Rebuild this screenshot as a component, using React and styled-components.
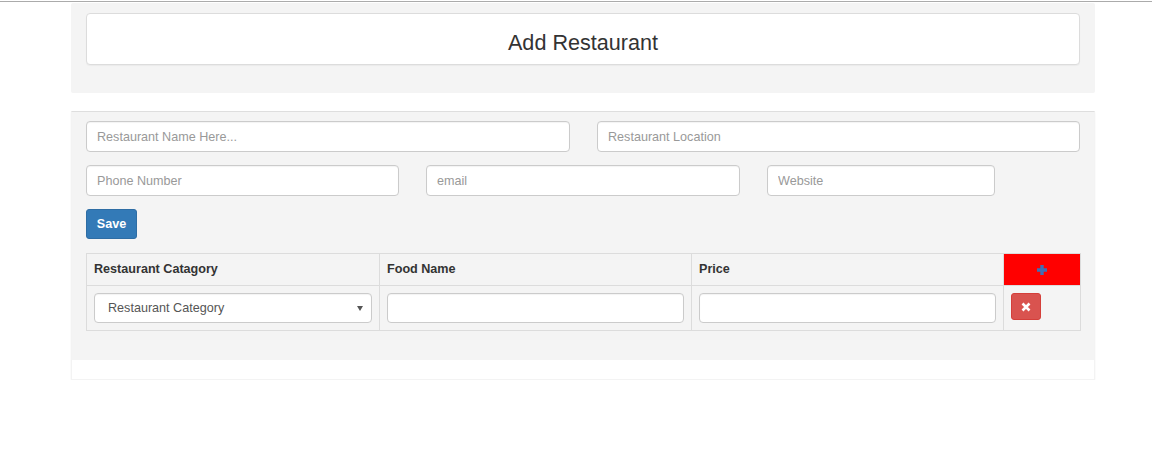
import styled, { createGlobalStyle } from "styled-components";

const GlobalStyle = createGlobalStyle`
  html, body {
    margin: 0;
    padding: 0;
    background: #fff;
    font-family: "Liberation Sans", Arial, sans-serif;
    font-size: 12.6px;
    color: #333;
  }
  * { box-sizing: border-box; }
`;

const TopRule = styled.div`
  height: 1px;
  margin-top: 1px;
  background: #ababab;
`;

const Container = styled.div`
  width: 1024px;
  margin: 1px 0 0 71px;
`;

const Well = styled.div`
  background: #f4f4f4;
  padding: 10px 15px 28px;
  border-radius: 2px;
`;

const TitleBox = styled.div`
  background: #fff;
  border: 1px solid #dcdcdc;
  border-radius: 4px;
  box-shadow: 0 1px 1px rgba(0, 0, 0, 0.04);
  padding: 17px 0 9px;
`;

const Title = styled.h3`
  margin: 0;
  text-align: center;
  font-size: 21.6px;
  font-weight: 400;
  line-height: 24px;
  color: #333;
`;

const Panel = styled.div`
  margin-top: 18px;
  background: #fff;
  border: 1px solid #f3f3f3;
  border-top-color: #dedede;
  box-shadow: 0 1px 2px rgba(0, 0, 0, 0.05);
`;

const PanelBody = styled.div`
  background: #f4f4f4;
  padding: 9px 14px 29px;
`;

const PanelFooter = styled.div`
  height: 19px;
`;

const FieldRow = styled.div`
  display: grid;
  grid-template-columns: ${(p) => p.$cols};
  column-gap: 27px;
  margin-bottom: 13px;
`;

const TextInput = styled.input`
  display: block;
  width: 100%;
  height: 31px;
  padding: 0 10px;
  border: 1px solid #cbcbcb;
  border-radius: 4px;
  background: #fff;
  font-family: inherit;
  font-size: 12.6px;
  color: #555;
  box-shadow: inset 0 1px 1px rgba(0, 0, 0, 0.05);
  outline: none;

  &::placeholder {
    color: #999;
  }
`;

const SaveButton = styled.button`
  display: block;
  width: 51px;
  height: 30px;
  padding: 0;
  margin-bottom: 14px;
  background: #337ab7;
  border: 1px solid #2e6da4;
  border-radius: 3px;
  color: #fff;
  font-family: inherit;
  font-size: 12.6px;
  font-weight: 700;
  cursor: pointer;
`;

const Table = styled.table`
  width: 100%;
  border-collapse: collapse;
  table-layout: fixed;
  border: 1px solid #dcdcdc;
`;

const HeadCell = styled.th`
  text-align: ${(p) => (p.$center ? "center" : "left")};
  padding: 6px 7px;
  line-height: 19px;
  font-size: 12.6px;
  font-weight: 700;
  color: #333;
  border: 1px solid #dcdcdc;
  background: ${(p) => (p.$accent ? "#ff0000" : "transparent")};
  vertical-align: middle;
`;

const Cell = styled.td`
  padding: 7px;
  border: 1px solid #dcdcdc;
  vertical-align: top;
`;

const CellInput = styled(TextInput)`
  height: 30px;
`;

const SelectBox = styled.div`
  position: relative;
  height: 30px;
  border: 1px solid #cbcbcb;
  border-radius: 4px;
  background: #fff;
  box-shadow: inset 0 1px 1px rgba(0, 0, 0, 0.05);
  display: flex;
  align-items: center;
  padding: 0 24px 0 13px;
  font-size: 12.6px;
  color: #555;
`;

const Caret = styled.svg`
  position: absolute;
  right: 8px;
  top: 12px;
`;

const IconButton = styled.button`
  display: flex;
  align-items: center;
  justify-content: center;
  width: 30px;
  height: 27px;
  padding: 0;
  background: #d9534f;
  border: 1px solid #d43f3a;
  border-radius: 3px;
  cursor: pointer;
`;

const PlusWrap = styled.span`
  display: inline-flex;
  vertical-align: middle;
`;

function PlusIcon() {
  return (
    <svg width="12" height="12" viewBox="0 0 12 12">
      <path d="M6 1v10M1 6h10" stroke="#3d6fb6" strokeWidth="3.4" />
    </svg>
  );
}

function RemoveIcon() {
  return (
    <svg width="10" height="10" viewBox="0 0 10 10">
      <path d="M1.5 1.5l7 7M8.5 1.5l-7 7" stroke="#fff" strokeWidth="2.6" />
    </svg>
  );
}

export default function App() {
  return (
    <>
      <GlobalStyle />
      <TopRule />
      <Container>
        <Well>
          <TitleBox>
            <Title>Add Restaurant</Title>
          </TitleBox>
        </Well>

        <Panel>
          <PanelBody>
            <FieldRow $cols="484px 483px">
              <TextInput placeholder="Restaurant Name Here..." />
              <TextInput placeholder="Restaurant Location" />
            </FieldRow>
            <FieldRow $cols="313px 314px 228px">
              <TextInput placeholder="Phone Number" />
              <TextInput placeholder="email" />
              <TextInput placeholder="Website" />
            </FieldRow>
            <SaveButton>Save</SaveButton>

            <Table>
              <colgroup>
                <col style={{ width: 293 }} />
                <col style={{ width: 312 }} />
                <col style={{ width: 312 }} />
                <col style={{ width: 77 }} />
              </colgroup>
              <thead>
                <tr>
                  <HeadCell>Restaurant Catagory</HeadCell>
                  <HeadCell>Food Name</HeadCell>
                  <HeadCell>Price</HeadCell>
                  <HeadCell $accent $center>
                    <PlusWrap>
                      <PlusIcon />
                    </PlusWrap>
                  </HeadCell>
                </tr>
              </thead>
              <tbody>
                <tr>
                  <Cell>
                    <SelectBox>
                      Restaurant Category
                      <Caret width="6" height="5" viewBox="0 0 6 5">
                        <path d="M0 0h6L3 5z" fill="#555" />
                      </Caret>
                    </SelectBox>
                  </Cell>
                  <Cell>
                    <CellInput />
                  </Cell>
                  <Cell>
                    <CellInput />
                  </Cell>
                  <Cell>
                    <IconButton>
                      <RemoveIcon />
                    </IconButton>
                  </Cell>
                </tr>
              </tbody>
            </Table>
          </PanelBody>
          <PanelFooter />
        </Panel>
      </Container>
    </>
  );
}
